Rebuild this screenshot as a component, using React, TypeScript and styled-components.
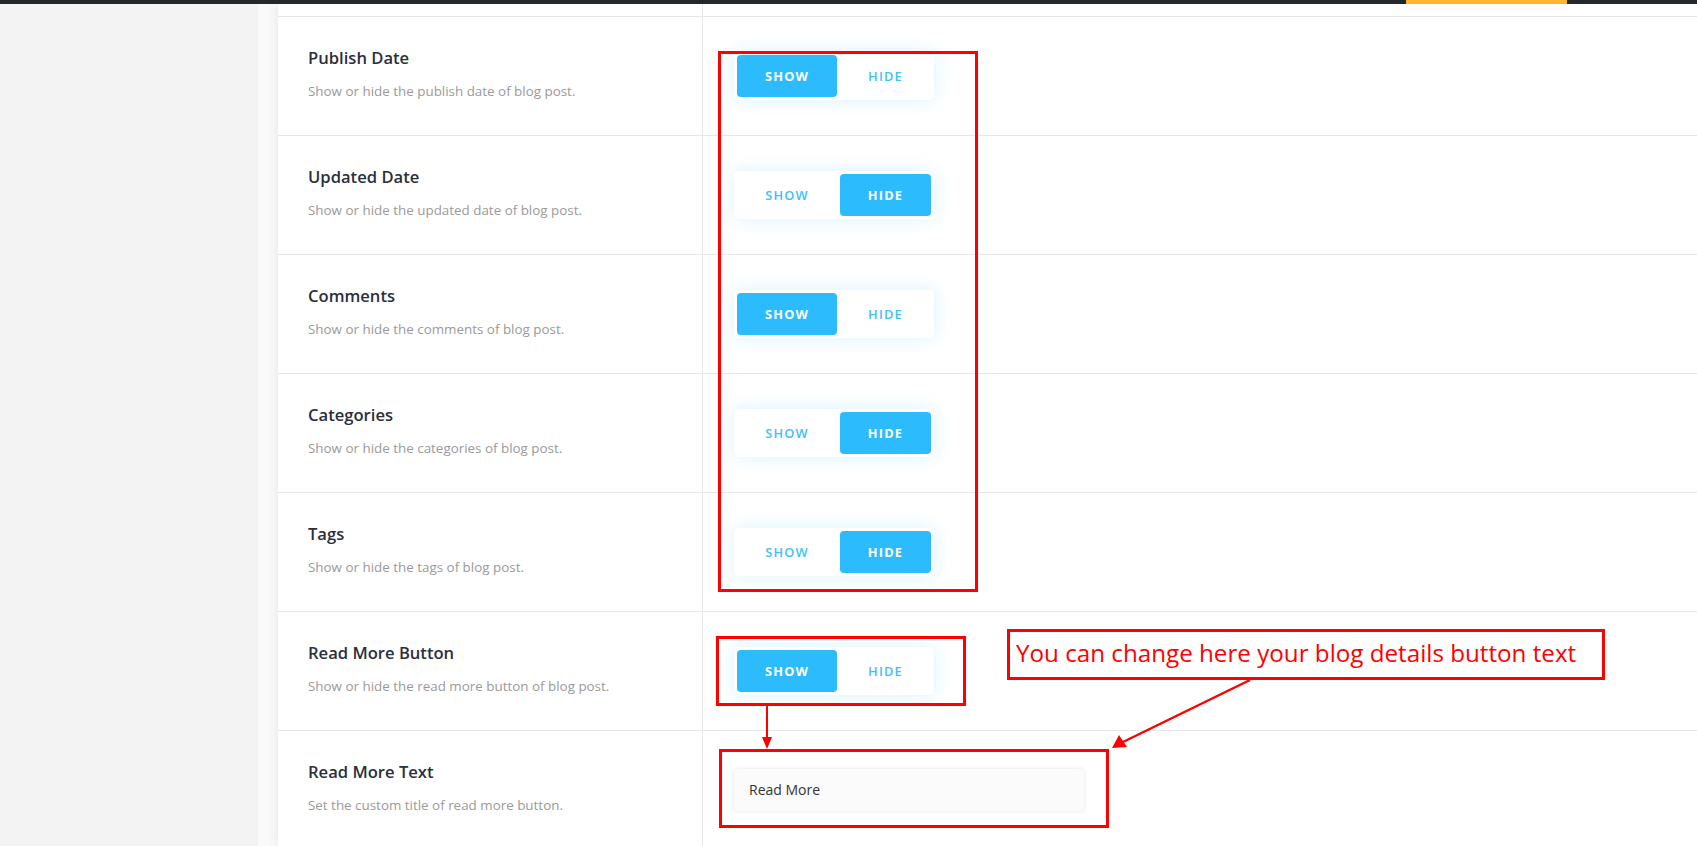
import React from "react";
import styled, { createGlobalStyle } from "styled-components";

const GlobalStyle = createGlobalStyle`
  html, body {
    margin: 0;
    padding: 0;
    overflow: hidden;
    background: #f3f3f3;
  }
  * { box-sizing: border-box; }
`;

const Page = styled.div`
  position: relative;
  width: 1697px;
  height: 846px;
  overflow: hidden;
  font-family: "Open Sans", "Noto Sans", sans-serif;
`;

const TopBar = styled.div`
  height: 4px;
  background: #23282d;
  display: flex;
`;

const TopTab = styled.div`
  margin-left: 1406px;
  width: 161px;
  height: 4px;
  background: #ffb833;
`;

const Body = styled.div`
  display: flex;
  height: 842px;
`;

const Sidebar = styled.div`
  width: 258px;
  flex: 0 0 258px;
  background: #f3f3f3;
`;

const Gutter = styled.div`
  flex: 1;
  display: flex;
  padding-left: 20px;
  background: #fafafa;
`;

const Panel = styled.div`
  flex: 1;
  background: #ffffff;
  box-shadow: -4px 0 8px rgba(0, 0, 0, 0.05);
`;

const Row = styled.div<{ $partial?: boolean }>`
  display: grid;
  grid-template-columns: 425px 1fr;
  height: ${(p) => (p.$partial ? "13px" : "119px")};
  border-bottom: 1px solid #e7e7e7;
`;

const LabelCell = styled.div`
  border-right: 1px solid #e9e9e9;
  padding: 29px 0 0 30px;
`;

const Title = styled.div`
  font-family: "Open Sans", sans-serif;
  font-weight: 600;
  font-size: 16.6px;
  line-height: 24px;
  color: #2a2f3c;
`;

const Desc = styled.div`
  margin-top: 11px;
  font-family: "Open Sans", sans-serif;
  font-size: 13.4px;
  line-height: 20px;
  color: #9a9a9a;
`;

const ControlCell = styled.div`
  display: flex;
  align-items: center;
  padding-left: 31px;
`;

const Toggle = styled.div`
  display: flex;
  gap: 3px;
  width: 200px;
  height: 48px;
  padding: 3px;
  background: #ffffff;
  border-radius: 5px;
  box-shadow: 0 0 18px rgba(43, 187, 253, 0.18);
`;

const ToggleButton = styled.button<{ $active?: boolean; $first?: boolean }>`
  flex: ${(p) => (p.$first ? "0 0 100px" : "1")};
  border: none;
  border-radius: 4px;
  padding: 0;
  background: ${(p) => (p.$active ? "#2cbcfd" : "transparent")};
  color: ${(p) => (p.$active ? "#ffffff" : "#3fc0fb")};
  font-family: "Open Sans", sans-serif;
  font-weight: ${(p) => (p.$active ? 700 : 600)};
  font-size: 12.8px;
  letter-spacing: 1.2px;
  cursor: pointer;
`;

const TextInput = styled.input`
  width: 350px;
  height: 42px;
  border: none;
  border-radius: 4px;
  background: #fbfbfb;
  box-shadow: 0 0 4px rgba(0, 0, 0, 0.12);
  padding: 0 15px 2px;
  font-family: "Open Sans", sans-serif;
  font-size: 14px;
  color: #333;
  outline: none;
`;

const RedBox = styled.div`
  position: absolute;
  border: 3px solid #ff0000;
  pointer-events: none;
`;

const Callout = styled(RedBox)`
  display: flex;
  align-items: center;
  padding: 0 0 5px 6px;
  color: #ff0000;
  font-family: "Open Sans", sans-serif;
  font-size: 24.2px;
  white-space: nowrap;
`;

const Arrows = styled.svg`
  position: absolute;
  left: 0;
  top: 0;
  pointer-events: none;
`;

type ToggleRow = { title: string; desc: string; value: "show" | "hide" };

const rows: ToggleRow[] = [
  { title: "Publish Date", desc: "Show or hide the publish date of blog post.", value: "show" },
  { title: "Updated Date", desc: "Show or hide the updated date of blog post.", value: "hide" },
  { title: "Comments", desc: "Show or hide the comments of blog post.", value: "show" },
  { title: "Categories", desc: "Show or hide the categories of blog post.", value: "hide" },
  { title: "Tags", desc: "Show or hide the tags of blog post.", value: "hide" },
  { title: "Read More Button", desc: "Show or hide the read more button of blog post.", value: "show" },
];

export default function App() {
  return (
    <Page>
      <GlobalStyle />
      <TopBar>
        <TopTab />
      </TopBar>
      <Body>
        <Sidebar />
        <Gutter>
          <Panel>
            <Row $partial>
              <LabelCell />
              <ControlCell />
            </Row>
            {rows.map((r) => (
              <Row key={r.title}>
                <LabelCell>
                  <Title>{r.title}</Title>
                  <Desc>{r.desc}</Desc>
                </LabelCell>
                <ControlCell>
                  <Toggle>
                    <ToggleButton $first $active={r.value === "show"}>SHOW</ToggleButton>
                    <ToggleButton $active={r.value === "hide"}>HIDE</ToggleButton>
                  </Toggle>
                </ControlCell>
              </Row>
            ))}
            <Row>
              <LabelCell>
                <Title>Read More Text</Title>
                <Desc>Set the custom title of read more button.</Desc>
              </LabelCell>
              <ControlCell>
                <TextInput defaultValue="Read More" />
              </ControlCell>
            </Row>
          </Panel>
        </Gutter>
      </Body>

      <RedBox style={{ left: 718, top: 51, width: 260, height: 541 }} />
      <RedBox style={{ left: 716, top: 636, width: 250, height: 70 }} />
      <RedBox style={{ left: 719, top: 749, width: 390, height: 79 }} />
      <Callout style={{ left: 1007, top: 629, width: 598, height: 51 }}>
        You can change here your blog details button text
      </Callout>
      <Arrows width="1697" height="846" viewBox="0 0 1697 846">
        <line x1="767" y1="706" x2="767" y2="738" stroke="#ff0000" strokeWidth="2" />
        <polygon points="762,737 772,737 767,749" fill="#ff0000" />
        <line x1="1250" y1="680" x2="1123" y2="742" stroke="#ff0000" strokeWidth="2.5" />
        <polygon points="1112,748 1119,735 1127,747" fill="#ff0000" />
      </Arrows>
    </Page>
  );
}
